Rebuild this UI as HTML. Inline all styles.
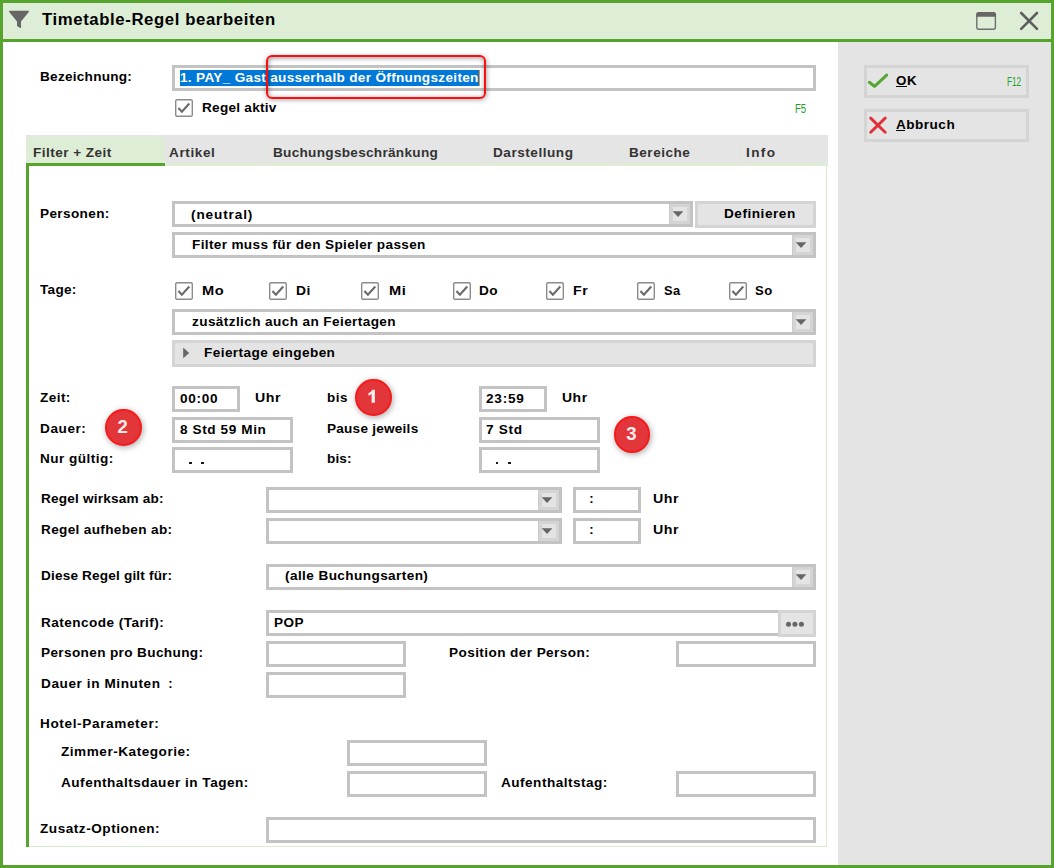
<!DOCTYPE html>
<html><head><meta charset="utf-8"><title>Timetable-Regel bearbeiten</title>
<style>
html,body{margin:0;padding:0;}
body{width:1054px;height:868px;position:relative;overflow:hidden;background:#fff;font-family:"Liberation Sans",sans-serif;}
.b{position:absolute;box-sizing:border-box;}
.t{position:absolute;white-space:pre;line-height:1;font-family:"Liberation Sans",sans-serif;}
</style></head><body>
<div class='b' style='left:0px;top:0px;width:1054px;height:868px;background:#56a32e;'></div>
<div class='b' style='left:3px;top:3px;width:1048px;height:36px;background:#deedd6;'></div>
<div class='b' style='left:3px;top:42px;width:1048px;height:823px;background:#fff;'></div>
<div class='b' style='left:838px;top:42px;width:213px;height:823px;background:#e4e4e4;'></div>
<svg class='b' style='left:8px;top:10px' width='24' height='20' viewBox='8 10 24 20'><path d='M9.6 10.8 L28.4 10.8 Q29.4 11.2 28.8 12 L21 21.6 L21 27.4 Q20.6 28.3 19.8 27.8 L17 26 L17 21.6 L9.2 12 Q8.6 11.2 9.6 10.8 Z' fill='#666'/></svg>
<svg class='b' style='left:975px;top:11px' width='22' height='20' viewBox='975 11 22 20'><rect x='976.8' y='12.8' width='18.6' height='16.4' rx='2' ry='2' fill='none' stroke='#6e6e6e' stroke-width='1.4'/><path d='M976.5 14 Q976.5 12.2 978.5 12.2 L993.7 12.2 Q995.8 12.2 995.8 14 L995.8 16.8 L976.5 16.8 Z' fill='#666'/></svg>
<svg class='b' style='left:1018px;top:10px' width='22' height='22' viewBox='1018 10 22 22'><path d='M1021.2 13 L1037 28.8 M1037 13 L1021.2 28.8' stroke='#5e5e5e' stroke-width='2.6' stroke-linecap='round' fill='none'/></svg>
<div class='b' style='left:172px;top:65.2px;width:644px;height:25.799999999999997px;border:3px solid #c3c3c3;background:#fff;'></div>
<div class='b' style='left:180px;top:70px;width:299.3px;height:16px;background:#0078d7;'></div>
<svg class='b' style='left:175px;top:99px' width='18' height='18' viewBox='0 0 18 18'><rect x='0.7' y='0.7' width='16.6' height='16.6' rx='1.4' ry='1.4' fill='#fff' stroke='#8c8c8c' stroke-width='1.4'/><path d='M3.4 9.0 L6.9 12.7 L14.3 4.5' fill='none' stroke='#6a6a6a' stroke-width='2.1'/></svg>
<div class='b' style='left:26px;top:135px;width:802px;height:30.80000000000001px;background:#e5e5e5;'></div>
<div class='b' style='left:26px;top:137px;width:139px;height:26px;background:#deedd6;'></div>
<div class='b' style='left:26px;top:163px;width:801px;height:2.8000000000000114px;background:#deedd6;'></div>
<div class='b' style='left:26px;top:163px;width:139px;height:3px;background:#56a32e;'></div>
<div class='b' style='left:265px;top:137px;width:1px;height:26px;background:#dde9d7;'></div>
<div class='b' style='left:485px;top:137px;width:1px;height:26px;background:#dde9d7;'></div>
<div class='b' style='left:622px;top:137px;width:1px;height:26px;background:#dde9d7;'></div>
<div class='b' style='left:740px;top:137px;width:1px;height:26px;background:#dde9d7;'></div>
<div class='b' style='left:26px;top:163px;width:3px;height:684px;background:#56a32e;'></div>
<div class='b' style='left:826px;top:165.8px;width:1px;height:681.2px;background:#d9ecd2;'></div>
<div class='b' style='left:29px;top:846px;width:798px;height:1px;background:#d9ecd2;'></div>
<div class='b' style='left:172px;top:201px;width:521px;height:26px;border:3px solid #c3c3c3;background:#fff;'></div><div class='b' style='left:669px;top:204px;width:21px;height:20px;background:#e4e4e4;border:3px solid #d4d4d4;border-left-width:4px;box-sizing:border-box;'></div><div class='b' style='left:669px;top:204px;width:1px;height:20px;background:#cbcbcb;'></div><svg class='b' style='left:669px;top:204px' width='21' height='20' viewBox='0 0 21 20'><path d='M3.7 7.2 L14.4 7.2 L9.05 12.9 Z' fill='#666'/></svg>
<div class='b' style='left:695px;top:201px;width:121px;height:26.5px;border:3px solid #d4d4d4;background:#e4e4e4;'></div>
<div class='b' style='left:172px;top:232px;width:644px;height:26px;border:3px solid #c3c3c3;background:#fff;'></div><div class='b' style='left:792px;top:235px;width:21px;height:20px;background:#e4e4e4;border:3px solid #d4d4d4;border-left-width:4px;box-sizing:border-box;'></div><div class='b' style='left:792px;top:235px;width:1px;height:20px;background:#cbcbcb;'></div><svg class='b' style='left:792px;top:235px' width='21' height='20' viewBox='0 0 21 20'><path d='M3.7 7.2 L14.4 7.2 L9.05 12.9 Z' fill='#666'/></svg>
<svg class='b' style='left:175px;top:282px' width='18' height='18' viewBox='0 0 18 18'><rect x='0.7' y='0.7' width='16.6' height='16.6' rx='1.4' ry='1.4' fill='#fff' stroke='#8c8c8c' stroke-width='1.4'/><path d='M3.4 9.0 L6.9 12.7 L14.3 4.5' fill='none' stroke='#6a6a6a' stroke-width='2.1'/></svg>
<svg class='b' style='left:268.7px;top:282px' width='18' height='18' viewBox='0 0 18 18'><rect x='0.7' y='0.7' width='16.6' height='16.6' rx='1.4' ry='1.4' fill='#fff' stroke='#8c8c8c' stroke-width='1.4'/><path d='M3.4 9.0 L6.9 12.7 L14.3 4.5' fill='none' stroke='#6a6a6a' stroke-width='2.1'/></svg>
<svg class='b' style='left:361.3px;top:282px' width='18' height='18' viewBox='0 0 18 18'><rect x='0.7' y='0.7' width='16.6' height='16.6' rx='1.4' ry='1.4' fill='#fff' stroke='#8c8c8c' stroke-width='1.4'/><path d='M3.4 9.0 L6.9 12.7 L14.3 4.5' fill='none' stroke='#6a6a6a' stroke-width='2.1'/></svg>
<svg class='b' style='left:452.7px;top:282px' width='18' height='18' viewBox='0 0 18 18'><rect x='0.7' y='0.7' width='16.6' height='16.6' rx='1.4' ry='1.4' fill='#fff' stroke='#8c8c8c' stroke-width='1.4'/><path d='M3.4 9.0 L6.9 12.7 L14.3 4.5' fill='none' stroke='#6a6a6a' stroke-width='2.1'/></svg>
<svg class='b' style='left:545.7px;top:282px' width='18' height='18' viewBox='0 0 18 18'><rect x='0.7' y='0.7' width='16.6' height='16.6' rx='1.4' ry='1.4' fill='#fff' stroke='#8c8c8c' stroke-width='1.4'/><path d='M3.4 9.0 L6.9 12.7 L14.3 4.5' fill='none' stroke='#6a6a6a' stroke-width='2.1'/></svg>
<svg class='b' style='left:637px;top:282px' width='18' height='18' viewBox='0 0 18 18'><rect x='0.7' y='0.7' width='16.6' height='16.6' rx='1.4' ry='1.4' fill='#fff' stroke='#8c8c8c' stroke-width='1.4'/><path d='M3.4 9.0 L6.9 12.7 L14.3 4.5' fill='none' stroke='#6a6a6a' stroke-width='2.1'/></svg>
<svg class='b' style='left:729px;top:282px' width='18' height='18' viewBox='0 0 18 18'><rect x='0.7' y='0.7' width='16.6' height='16.6' rx='1.4' ry='1.4' fill='#fff' stroke='#8c8c8c' stroke-width='1.4'/><path d='M3.4 9.0 L6.9 12.7 L14.3 4.5' fill='none' stroke='#6a6a6a' stroke-width='2.1'/></svg>
<div class='b' style='left:172px;top:309px;width:644px;height:26px;border:3px solid #c3c3c3;background:#fff;'></div><div class='b' style='left:792px;top:312px;width:21px;height:20px;background:#e4e4e4;border:3px solid #d4d4d4;border-left-width:4px;box-sizing:border-box;'></div><div class='b' style='left:792px;top:312px;width:1px;height:20px;background:#cbcbcb;'></div><svg class='b' style='left:792px;top:312px' width='21' height='20' viewBox='0 0 21 20'><path d='M3.7 7.2 L14.4 7.2 L9.05 12.9 Z' fill='#666'/></svg>
<div class='b' style='left:172px;top:340px;width:644px;height:27px;border:3px solid #d4d4d4;background:#e4e4e4;'></div>
<svg class='b' style='left:183px;top:347px' width='8' height='12' viewBox='0 0 8 12'><path d='M0.2 0.6 L6.2 5.9 L0.2 11.2 Z' fill='#686868'/></svg>
<div class='b' style='left:172px;top:386px;width:68px;height:25.69999999999999px;border:3px solid #c3c3c3;background:#fff;'></div>
<div class='b' style='left:479px;top:386px;width:68px;height:25.69999999999999px;border:3px solid #c3c3c3;background:#fff;'></div>
<div class='b' style='left:172px;top:417px;width:120.5px;height:25.80000000000001px;border:3px solid #c3c3c3;background:#fff;'></div>
<div class='b' style='left:479px;top:417px;width:121px;height:25.80000000000001px;border:3px solid #c3c3c3;background:#fff;'></div>
<div class='b' style='left:172px;top:447.1px;width:120.5px;height:25.69999999999999px;border:3px solid #c3c3c3;background:#fff;'></div>
<div class='b' style='left:479px;top:447.1px;width:121px;height:25.69999999999999px;border:3px solid #c3c3c3;background:#fff;'></div>
<div class='b' style='left:188.79999999999998px;top:462.1px;width:2.8000000000000114px;height:2.0px;background:#1a1a1a;'></div>
<div class='b' style='left:201.0px;top:462.1px;width:2.8000000000000114px;height:2.0px;background:#1a1a1a;'></div>
<div class='b' style='left:495.6px;top:462.1px;width:2.7999999999999545px;height:2.0px;background:#1a1a1a;'></div>
<div class='b' style='left:507.8px;top:462.1px;width:2.7999999999999545px;height:2.0px;background:#1a1a1a;'></div>
<div class='b' style='left:266px;top:486.9px;width:296px;height:25.800000000000068px;border:3px solid #c3c3c3;background:#fff;'></div><div class='b' style='left:538px;top:489.9px;width:21px;height:19.800000000000068px;background:#e4e4e4;border:3px solid #d4d4d4;border-left-width:4px;box-sizing:border-box;'></div><div class='b' style='left:538px;top:489.9px;width:1px;height:19.800000000000068px;background:#cbcbcb;'></div><svg class='b' style='left:538px;top:489.9px' width='21' height='20' viewBox='0 0 21 20'><path d='M3.7 7.2 L14.4 7.2 L9.05 12.9 Z' fill='#666'/></svg>
<div class='b' style='left:573px;top:486.9px;width:68px;height:25.800000000000068px;border:3px solid #c3c3c3;background:#fff;'></div>
<div class='b' style='left:266px;top:518px;width:296px;height:25.799999999999955px;border:3px solid #c3c3c3;background:#fff;'></div><div class='b' style='left:538px;top:521px;width:21px;height:19.799999999999955px;background:#e4e4e4;border:3px solid #d4d4d4;border-left-width:4px;box-sizing:border-box;'></div><div class='b' style='left:538px;top:521px;width:1px;height:19.799999999999955px;background:#cbcbcb;'></div><svg class='b' style='left:538px;top:521px' width='21' height='20' viewBox='0 0 21 20'><path d='M3.7 7.2 L14.4 7.2 L9.05 12.9 Z' fill='#666'/></svg>
<div class='b' style='left:573px;top:518px;width:68px;height:25.799999999999955px;border:3px solid #c3c3c3;background:#fff;'></div>
<div class='b' style='left:266px;top:563.9px;width:550px;height:25.899999999999977px;border:3px solid #c3c3c3;background:#fff;'></div><div class='b' style='left:792px;top:566.9px;width:21px;height:19.899999999999977px;background:#e4e4e4;border:3px solid #d4d4d4;border-left-width:4px;box-sizing:border-box;'></div><div class='b' style='left:792px;top:566.9px;width:1px;height:19.899999999999977px;background:#cbcbcb;'></div><svg class='b' style='left:792px;top:566.9px' width='21' height='20' viewBox='0 0 21 20'><path d='M3.7 7.2 L14.4 7.2 L9.05 12.9 Z' fill='#666'/></svg>
<div class='b' style='left:266px;top:610.1px;width:515px;height:25.600000000000023px;border:3px solid #c3c3c3;background:#fff;'></div>
<div class='b' style='left:778px;top:610px;width:38px;height:26.899999999999977px;border:3px solid #d4d4d4;background:#e4e4e4;'></div>
<svg class='b' style='left:778px;top:610px' width='38' height='27' viewBox='778 610 38 27'><circle cx='788.5' cy='624.2' r='2.5' fill='#666'/><circle cx='794.9' cy='624.2' r='2.5' fill='#666'/><circle cx='801.4' cy='624.2' r='2.5' fill='#666'/></svg>
<div class='b' style='left:266px;top:641.2px;width:140px;height:25.59999999999991px;border:3px solid #c3c3c3;background:#fff;'></div>
<div class='b' style='left:676px;top:641.2px;width:140px;height:25.59999999999991px;border:3px solid #c3c3c3;background:#fff;'></div>
<div class='b' style='left:266px;top:672.2px;width:140px;height:25.699999999999932px;border:3px solid #c3c3c3;background:#fff;'></div>
<div class='b' style='left:347px;top:740.1px;width:139.5px;height:25.799999999999955px;border:3px solid #c3c3c3;background:#fff;'></div>
<div class='b' style='left:347px;top:771.1px;width:139.5px;height:25.799999999999955px;border:3px solid #c3c3c3;background:#fff;'></div>
<div class='b' style='left:676px;top:771.1px;width:140px;height:25.799999999999955px;border:3px solid #c3c3c3;background:#fff;'></div>
<div class='b' style='left:266px;top:817.1px;width:550px;height:25.699999999999932px;border:3px solid #c3c3c3;background:#fff;'></div>
<div class='b' style='left:864px;top:65px;width:165px;height:33px;border:3px solid #d4d4d4;background:#e4e4e4;'></div>
<div class='b' style='left:864px;top:109px;width:165px;height:33px;border:3px solid #d4d4d4;background:#e4e4e4;'></div>
<svg class='b' style='left:865px;top:70px' width='26' height='22' viewBox='865 70 26 22'><path d='M869.3 82.3 L874.5 86.3 L886.7 75.1' fill='none' stroke='#55a630' stroke-width='3' stroke-linecap='round' stroke-linejoin='round'/></svg>
<svg class='b' style='left:866px;top:114px' width='24' height='22' viewBox='866 114 24 22'><path d='M870.7 118.1 L885.2 132.2 M885.2 118.1 L870.7 132.2' fill='none' stroke='#e03038' stroke-width='2.9' stroke-linecap='round'/></svg>
<div class='b' style='left:896px;top:85.9px;width:10.700000000000045px;height:1.2999999999999972px;background:#000;'></div>
<div class='b' style='left:896px;top:129.9px;width:8.899999999999977px;height:1.299999999999983px;background:#000;'></div>
<div class='b' style='left:354.80px;top:378.90px;width:36.8px;height:36.8px;border-radius:50%;background:#e2363b;border:2px solid #f71a1a;box-shadow:1px 1.5px 6px rgba(0,0,0,0.35);'></div><svg class='b' style='left:363.20px;top:387.30px' width='20' height='20' viewBox='363.20 387.30 20 20'><path d='M375.1 403.1 L371.8 403.1 L371.8 394.3 C371 395.1 370 395.7 368.7 396.1 L368.7 393.4 C370.5 392.7 371.9 391.5 372.6 390 L375.1 390 Z' fill='#fcecec'/></svg>
<div class='b' style='left:104.80px;top:408.90px;width:36.8px;height:36.8px;border-radius:50%;background:#e2363b;border:2px solid #f71a1a;box-shadow:1px 1.5px 6px rgba(0,0,0,0.35);'></div><span class='t' style='left:102.60px;top:417.70px;width:40px;text-align:center;font-size:18.5px;font-weight:bold;color:#fcecec'>2</span>
<div class='b' style='left:613.70px;top:415.80px;width:36.8px;height:36.8px;border-radius:50%;background:#e2363b;border:2px solid #f71a1a;box-shadow:1px 1.5px 6px rgba(0,0,0,0.35);'></div><span class='t' style='left:611.50px;top:424.60px;width:40px;text-align:center;font-size:18.5px;font-weight:bold;color:#fcecec'>3</span>
<div class='b' style='left:265.6px;top:55.2px;width:220.2px;height:43.4px;border:2.2px solid #f90f0f;border-radius:6px;box-sizing:border-box;box-shadow:0.5px 1px 5px rgba(0,0,0,0.33), inset 0.5px 1px 5px rgba(0,0,0,0.42)'></div>
<div class='b' style='left:479px;top:70px;width:1px;height:16px;background:#e8923a;'></div>
<span class='t' style='left:42.24px;top:12.06px;font-size:16px;font-weight:bold;color:#000;letter-spacing:0.580px;transform-origin:0 0;transform:scaleX(1.045);'>Timetable-Regel bearbeiten</span>
<span class='t' style='left:39.72px;top:70.00px;font-size:13px;font-weight:bold;color:#000;letter-spacing:0.246px;transform-origin:0 0;transform:scaleX(1.045);'>Bezeichnung:</span>
<span class='t' style='left:180.22px;top:71.00px;font-size:13px;font-weight:bold;color:#fff;letter-spacing:0.304px;transform-origin:0 0;transform:scaleX(1.045);'>1. PAY_ Gast ausserhalb der Öffnungszeiten</span>
<span class='t' style='left:202.22px;top:101.00px;font-size:13px;font-weight:bold;color:#000;letter-spacing:0.254px;transform-origin:0 0;transform:scaleX(1.045);'>Regel aktiv</span>
<span class='t' style='left:794.78px;top:102.84px;font-size:12px;font-weight:normal;color:#22a122;letter-spacing:0.000px;transform-origin:0 0;transform:scaleX(0.799);'>F5</span>
<span class='t' style='left:32.82px;top:146.00px;font-size:13px;font-weight:bold;color:#333;letter-spacing:0.434px;transform-origin:0 0;transform:scaleX(1.045);'>Filter + Zeit</span>
<span class='t' style='left:169.42px;top:146.00px;font-size:13px;font-weight:bold;color:#333;letter-spacing:0.560px;transform-origin:0 0;transform:scaleX(1.045);'>Artikel</span>
<span class='t' style='left:273.02px;top:146.00px;font-size:13px;font-weight:bold;color:#333;letter-spacing:0.278px;transform-origin:0 0;transform:scaleX(1.045);'>Buchungsbeschränkung</span>
<span class='t' style='left:492.62px;top:146.00px;font-size:13px;font-weight:bold;color:#333;letter-spacing:0.504px;transform-origin:0 0;transform:scaleX(1.045);'>Darstellung</span>
<span class='t' style='left:629.02px;top:146.00px;font-size:13px;font-weight:bold;color:#333;letter-spacing:0.479px;transform-origin:0 0;transform:scaleX(1.045);'>Bereiche</span>
<span class='t' style='left:746.22px;top:146.00px;font-size:13px;font-weight:bold;color:#333;letter-spacing:1.308px;transform-origin:0 0;transform:scaleX(1.045);'>Info</span>
<span class='t' style='left:40.22px;top:206.50px;font-size:13px;font-weight:bold;color:#000;letter-spacing:0.354px;transform-origin:0 0;transform:scaleX(1.045);'>Personen:</span>
<span class='t' style='left:191.22px;top:207.50px;font-size:13px;font-weight:bold;color:#000;letter-spacing:0.844px;transform-origin:0 0;transform:scaleX(1.045);'>(neutral)</span>
<span class='t' style='left:191.92px;top:238.00px;font-size:13px;font-weight:bold;color:#000;letter-spacing:0.332px;transform-origin:0 0;transform:scaleX(1.045);'>Filter muss für den Spieler passen</span>
<span class='t' style='left:724.02px;top:207.00px;font-size:13px;font-weight:bold;color:#000;letter-spacing:0.506px;transform-origin:0 0;transform:scaleX(1.045);'>Definieren</span>
<span class='t' style='left:40.22px;top:283.00px;font-size:13px;font-weight:bold;color:#000;letter-spacing:0.278px;transform-origin:0 0;transform:scaleX(1.045);'>Tage:</span>
<span class='t' style='left:202.22px;top:284.00px;font-size:13px;font-weight:bold;color:#000;letter-spacing:0.500px;transform-origin:0 0;transform:scaleX(1.125);'>Mo</span>
<span class='t' style='left:296.02px;top:284.00px;font-size:13px;font-weight:bold;color:#000;letter-spacing:0.500px;transform-origin:0 0;transform:scaleX(1.067);'>Di</span>
<span class='t' style='left:388.62px;top:284.00px;font-size:13px;font-weight:bold;color:#000;letter-spacing:0.500px;transform-origin:0 0;transform:scaleX(1.124);'>Mi</span>
<span class='t' style='left:479.22px;top:284.00px;font-size:13px;font-weight:bold;color:#000;letter-spacing:0.500px;transform-origin:0 0;transform:scaleX(1.048);'>Do</span>
<span class='t' style='left:572.72px;top:284.00px;font-size:13px;font-weight:bold;color:#000;letter-spacing:0.500px;transform-origin:0 0;transform:scaleX(1.089);'>Fr</span>
<span class='t' style='left:663.72px;top:284.00px;font-size:13px;font-weight:bold;color:#000;letter-spacing:0.500px;transform-origin:0 0;transform:scaleX(0.987);'>Sa</span>
<span class='t' style='left:755.22px;top:284.00px;font-size:13px;font-weight:bold;color:#000;letter-spacing:0.500px;transform-origin:0 0;transform:scaleX(1.004);'>So</span>
<span class='t' style='left:191.52px;top:314.50px;font-size:13px;font-weight:bold;color:#000;letter-spacing:0.379px;transform-origin:0 0;transform:scaleX(1.045);'>zusätzlich auch an Feiertagen</span>
<span class='t' style='left:203.72px;top:346.00px;font-size:13px;font-weight:bold;color:#000;letter-spacing:0.399px;transform-origin:0 0;transform:scaleX(1.045);'>Feiertage eingeben</span>
<span class='t' style='left:40.22px;top:391.00px;font-size:13px;font-weight:bold;color:#000;letter-spacing:0.409px;transform-origin:0 0;transform:scaleX(1.045);'>Zeit:</span>
<span class='t' style='left:179.52px;top:392.00px;font-size:13px;font-weight:bold;color:#000;letter-spacing:0.659px;transform-origin:0 0;transform:scaleX(1.045);'>00:00</span>
<span class='t' style='left:254.92px;top:391.00px;font-size:13px;font-weight:bold;color:#000;letter-spacing:0.500px;transform-origin:0 0;transform:scaleX(1.090);'>Uhr</span>
<span class='t' style='left:327.02px;top:391.00px;font-size:13px;font-weight:bold;color:#000;letter-spacing:0.500px;transform-origin:0 0;transform:scaleX(1.030);'>bis</span>
<span class='t' style='left:486.22px;top:392.00px;font-size:13px;font-weight:bold;color:#000;letter-spacing:0.754px;transform-origin:0 0;transform:scaleX(1.045);'>23:59</span>
<span class='t' style='left:561.92px;top:391.00px;font-size:13px;font-weight:bold;color:#000;letter-spacing:0.500px;transform-origin:0 0;transform:scaleX(1.073);'>Uhr</span>
<span class='t' style='left:40.22px;top:422.00px;font-size:13px;font-weight:bold;color:#000;letter-spacing:0.547px;transform-origin:0 0;transform:scaleX(1.045);'>Dauer:</span>
<span class='t' style='left:179.52px;top:422.50px;font-size:13px;font-weight:bold;color:#000;letter-spacing:0.577px;transform-origin:0 0;transform:scaleX(1.045);'>8 Std 59 Min</span>
<span class='t' style='left:327.02px;top:421.50px;font-size:13px;font-weight:bold;color:#000;letter-spacing:0.226px;transform-origin:0 0;transform:scaleX(1.045);'>Pause jeweils</span>
<span class='t' style='left:486.22px;top:422.50px;font-size:13px;font-weight:bold;color:#000;letter-spacing:0.687px;transform-origin:0 0;transform:scaleX(1.045);'>7 Std</span>
<span class='t' style='left:40.22px;top:452.00px;font-size:13px;font-weight:bold;color:#000;letter-spacing:0.452px;transform-origin:0 0;transform:scaleX(1.045);'>Nur gültig:</span>
<span class='t' style='left:327.02px;top:452.00px;font-size:13px;font-weight:bold;color:#000;letter-spacing:0.139px;transform-origin:0 0;transform:scaleX(1.045);'>bis:</span>
<span class='t' style='left:40.52px;top:492.00px;font-size:13px;font-weight:bold;color:#000;letter-spacing:0.198px;transform-origin:0 0;transform:scaleX(1.045);'>Regel wirksam ab:</span>
<span class='t' style='left:589.22px;top:492.00px;font-size:13px;font-weight:bold;color:#000;letter-spacing:0.000px;'>:</span>
<span class='t' style='left:652.82px;top:492.00px;font-size:13px;font-weight:bold;color:#000;letter-spacing:0.500px;transform-origin:0 0;transform:scaleX(1.094);'>Uhr</span>
<span class='t' style='left:40.52px;top:523.00px;font-size:13px;font-weight:bold;color:#000;letter-spacing:0.325px;transform-origin:0 0;transform:scaleX(1.045);'>Regel aufheben ab:</span>
<span class='t' style='left:589.22px;top:523.00px;font-size:13px;font-weight:bold;color:#000;letter-spacing:0.000px;'>:</span>
<span class='t' style='left:652.82px;top:523.00px;font-size:13px;font-weight:bold;color:#000;letter-spacing:0.500px;transform-origin:0 0;transform:scaleX(1.094);'>Uhr</span>
<span class='t' style='left:40.52px;top:569.00px;font-size:13px;font-weight:bold;color:#000;letter-spacing:0.169px;transform-origin:0 0;transform:scaleX(1.045);'>Diese Regel gilt für:</span>
<span class='t' style='left:285.22px;top:569.00px;font-size:13px;font-weight:bold;color:#000;letter-spacing:0.392px;transform-origin:0 0;transform:scaleX(1.045);'>(alle Buchungsarten)</span>
<span class='t' style='left:40.62px;top:616.00px;font-size:13px;font-weight:bold;color:#000;letter-spacing:0.426px;transform-origin:0 0;transform:scaleX(1.045);'>Ratencode (Tarif):</span>
<span class='t' style='left:274.02px;top:616.00px;font-size:13px;font-weight:bold;color:#000;letter-spacing:0.500px;transform-origin:0 0;transform:scaleX(1.040);'>POP</span>
<span class='t' style='left:40.62px;top:646.00px;font-size:13px;font-weight:bold;color:#000;letter-spacing:0.348px;transform-origin:0 0;transform:scaleX(1.045);'>Personen pro Buchung:</span>
<span class='t' style='left:449.42px;top:645.50px;font-size:13px;font-weight:bold;color:#000;letter-spacing:0.395px;transform-origin:0 0;transform:scaleX(1.045);'>Position der Person:</span>
<span class='t' style='left:40.62px;top:676.50px;font-size:13px;font-weight:bold;color:#000;letter-spacing:0.561px;transform-origin:0 0;transform:scaleX(1.045);'>Dauer in Minuten</span>
<span class='t' style='left:168.22px;top:676.50px;font-size:13px;font-weight:bold;color:#000;letter-spacing:0.000px;'>:</span>
<span class='t' style='left:40.02px;top:716.70px;font-size:13px;font-weight:bold;color:#000;letter-spacing:0.601px;transform-origin:0 0;transform:scaleX(1.045);'>Hotel-Parameter:</span>
<span class='t' style='left:61.22px;top:745.00px;font-size:13px;font-weight:bold;color:#000;letter-spacing:0.498px;transform-origin:0 0;transform:scaleX(1.045);'>Zimmer-Kategorie:</span>
<span class='t' style='left:61.22px;top:776.00px;font-size:13px;font-weight:bold;color:#000;letter-spacing:0.480px;transform-origin:0 0;transform:scaleX(1.045);'>Aufenthaltsdauer in Tagen:</span>
<span class='t' style='left:500.92px;top:776.00px;font-size:13px;font-weight:bold;color:#000;letter-spacing:0.462px;transform-origin:0 0;transform:scaleX(1.045);'>Aufenthaltstag:</span>
<span class='t' style='left:40.02px;top:822.00px;font-size:13px;font-weight:bold;color:#000;letter-spacing:0.504px;transform-origin:0 0;transform:scaleX(1.045);'>Zusatz-Optionen:</span>
<span class='t' style='left:896.22px;top:74.00px;font-size:13px;font-weight:bold;color:#000;letter-spacing:0.500px;transform-origin:0 0;transform:scaleX(1.025);'>OK</span>
<span class='t' style='left:1006.88px;top:75.84px;font-size:12px;font-weight:normal;color:#22a122;letter-spacing:0.000px;transform-origin:0 0;transform:scaleX(0.686);'>F12</span>
<span class='t' style='left:895.92px;top:118.00px;font-size:13px;font-weight:bold;color:#000;letter-spacing:0.453px;transform-origin:0 0;transform:scaleX(1.045);'>Abbruch</span>
</body></html>
